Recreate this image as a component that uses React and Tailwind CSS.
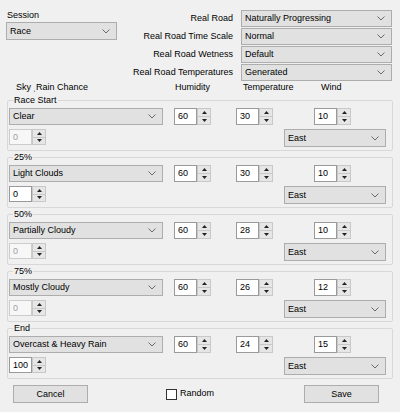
import React from "react";

function Chevron() {
  return (
    <svg width="8" height="5" viewBox="0 0 8 5" className="shrink-0">
      <polyline points="0.5,0.5 4,4 7.5,0.5" fill="none" stroke="#6a6a6a" strokeWidth="1" />
    </svg>
  );
}

function Combo({ text, cls }) {
  return (
    <div className={`flex items-center justify-between bg-[#e1e1e1] border border-[#adadad] pl-[3px] pr-[6px] ${cls}`}>
      <span className="leading-none">{text}</span>
      <Chevron />
    </div>
  );
}

function Arrows() {
  return (
    <div className="w-[14px] h-full border border-[#c8c8c8] bg-[#e6e6e6] flex flex-col">
      <div className="flex-1 flex items-center justify-center border-b border-[#c8c8c8]">
        <svg width="5" height="3" viewBox="0 0 5 3"><polygon points="2.5,0 5,3 0,3" fill="#222" /></svg>
      </div>
      <div className="flex-1 flex items-center justify-center">
        <svg width="5" height="3" viewBox="0 0 5 3"><polygon points="0,0 5,0 2.5,3" fill="#222" /></svg>
      </div>
    </div>
  );
}

function Spinner({ value, disabled, cls = "h-[17px]" }) {
  return (
    <div className={`flex ${cls}`}>
      <div
        className={`w-[23px] h-full flex items-center pl-[3px] leading-none ${
          disabled ? "border border-[#cccccc] bg-[#f7f7f7] text-[#a0a0a0]" : "border border-[#9a9a9a] bg-white text-black"
        }`}
      >
        {value}
      </div>
      <Arrows />
    </div>
  );
}

const groups = [
  { label: "Race Start", sky: "Clear", hum: "60", temp: "30", wind: "10", rain: "0", dis: true },
  { label: "25%", sky: "Light Clouds", hum: "60", temp: "30", wind: "10", rain: "0", dis: false },
  { label: "50%", sky: "Partially Cloudy", hum: "60", temp: "28", wind: "10", rain: "0", dis: true },
  { label: "75%", sky: "Mostly Cloudy", hum: "60", temp: "26", wind: "12", rain: "0", dis: true },
  { label: "End", sky: "Overcast & Heavy Rain", hum: "60", temp: "24", wind: "15", rain: "100", dis: false },
];

export default function App() {
  return (
    <div className="w-[400px] h-[412px] bg-[#f0f0f0] text-black text-[9px] font-['Liberation_Sans','DejaVu_Sans',Arial,sans-serif] overflow-hidden">
      {/* top section */}
      <div className="flex justify-between pt-[10px] pl-[6px] pr-[8px]">
        <div className="flex flex-col">
          <div className="h-[12px] flex items-center pl-[1px]">Session</div>
          <Combo text="Race" cls="w-[111px] h-[18px]" />
        </div>
        <div className="grid grid-cols-[auto_151px] gap-x-[8px] gap-y-[1px]">
          <div className="h-[17px] flex items-center justify-end">Real Road</div>
          <Combo text="Naturally Progressing" cls="h-[17px]" />
          <div className="h-[17px] flex items-center justify-end">Real Road Time Scale</div>
          <Combo text="Normal" cls="h-[17px]" />
          <div className="h-[17px] flex items-center justify-end">Real Road Wetness</div>
          <Combo text="Default" cls="h-[17px]" />
          <div className="h-[17px] flex items-center justify-end">Real Road Temperatures</div>
          <Combo text="Generated" cls="h-[17px]" />
        </div>
      </div>

      {/* header row */}
      <div className="h-[12px] mt-[1px] flex items-center pl-[16px]">
        <span className="w-[17px]">Sky</span>
        <span className="w-[142px]">ˌRain Chance</span>
        <span className="w-[68px]">Humidity</span>
        <span className="w-[78px]">Temperature</span>
        <span>Wind</span>
      </div>

      {/* groups */}
      <div className="flex flex-col">
        {groups.map((g) => (
          <fieldset
            key={g.label}
            className="mx-[7px] h-[57px] border border-[#d8d8d8] rounded-[2px] pl-[1px] pr-[1px] pt-[2px] pb-[3px]"
          >
            <legend className="ml-[4px] px-[1px] h-[12px] leading-[12px]">{g.label}</legend>
            <div className="flex items-center h-[17px]">
              <Combo text={g.sky} cls="w-[154px] h-[17px]" />
              <div className="ml-[11px]"><Spinner value={g.hum} /></div>
              <div className="ml-[25px]"><Spinner value={g.temp} /></div>
              <div className="ml-[41px]"><Spinner value={g.wind} /></div>
            </div>
            <div className="flex items-start mt-[4px]">
              <Spinner value={g.rain} disabled={g.dis} cls="h-[16px]" />
              <div className="ml-[238px]">
                <Combo text="East" cls="w-[102px] h-[18px]" />
              </div>
            </div>
          </fieldset>
        ))}
      </div>

      {/* buttons */}
      <div className="flex items-center mt-[6px] pl-[13px]">
        <button className="w-[75px] h-[18px] bg-[#e1e1e1] border border-[#adadad] flex items-center justify-center leading-none">
          Cancel
        </button>
        <div className="ml-[78px] flex items-center">
          <div className="w-[11px] h-[11px] border border-[#333] bg-white" />
          <span className="ml-[3px]">Random</span>
        </div>
        <button className="ml-[90px] w-[75px] h-[18px] bg-[#e1e1e1] border border-[#adadad] flex items-center justify-center leading-none">
          Save
        </button>
      </div>
    </div>
  );
}
